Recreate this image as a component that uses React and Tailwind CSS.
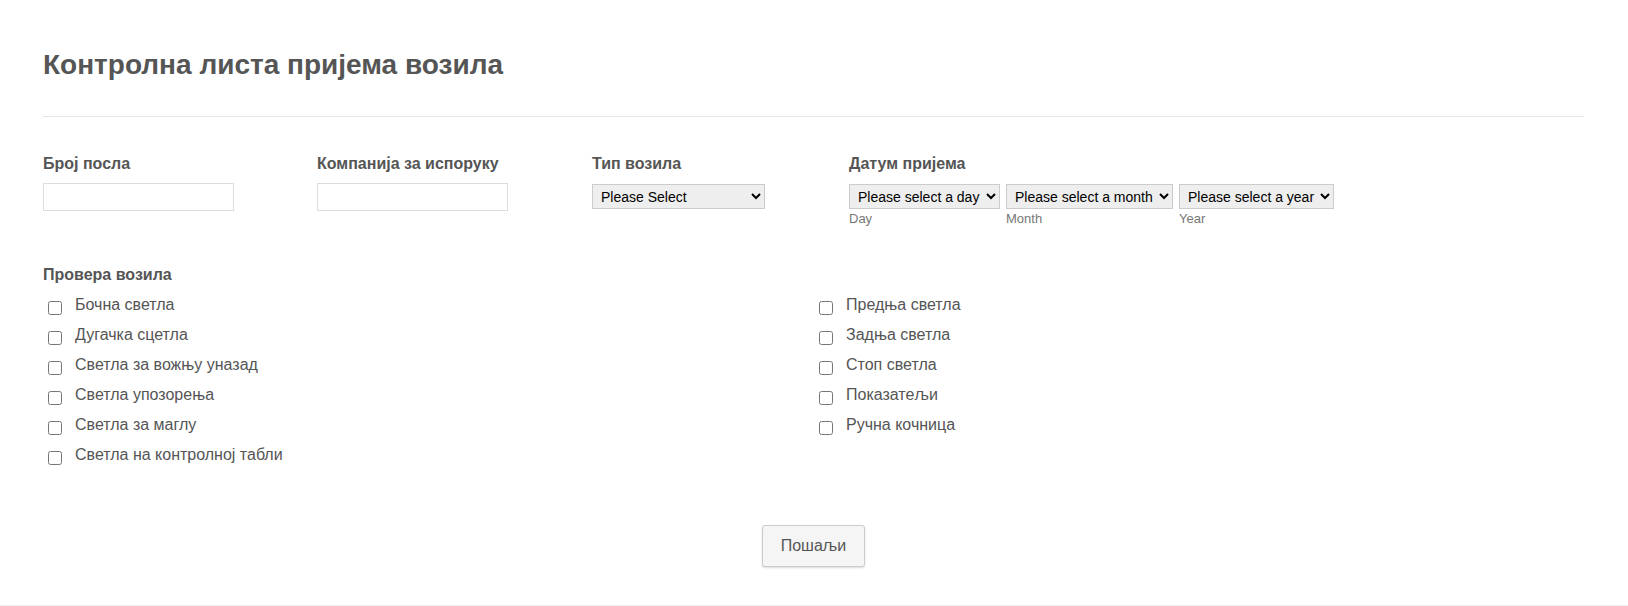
import { useState } from "react";

const LEFT_ITEMS = [
  "Бочна светла",
  "Дугачка сцетла",
  "Светла за вожњу уназад",
  "Светла упозорења",
  "Светла за маглу",
  "Светла на контролној табли",
];

const RIGHT_ITEMS = [
  "Предња светла",
  "Задња светла",
  "Стоп светла",
  "Показатељи",
  "Ручна кочница",
];

function CheckItem({ label }) {
  const [checked, setChecked] = useState(false);
  return (
    <label className="flex items-center h-[30px] text-[16px] text-[#555] cursor-pointer">
      <input
        type="checkbox"
        checked={checked}
        onChange={() => setChecked(!checked)}
        className="w-[14px] h-[14px] ml-[5px] mr-[13px] mt-[4px]"
      />
      <span className="-mt-[2px]">{label}</span>
    </label>
  );
}

export default function App() {
  return (
    <div
      className="min-h-[606px] bg-white border-b border-[#eee] pl-[43px] pr-[44px] pt-[47px]"
      style={{ fontFamily: '"Liberation Sans", Arial, sans-serif' }}
    >
      <h1 className="text-[28px] leading-[36px] font-bold text-[#555]">
        Контролна листа пријема возила
      </h1>
      <div className="mt-[33px] border-t border-[#e6e6e6]" />

      {/* top fields */}
      <div className="flex mt-[37px]">
        <div className="w-[274px]">
          <div className="text-[16px] font-bold text-[#555] leading-[20px]">Број посла</div>
          <input
            type="text"
            className="mt-[9px] w-[191px] h-[28px] border border-[#ddd] bg-white"
          />
        </div>
        <div className="w-[275px]">
          <div className="text-[16px] font-bold text-[#555] leading-[20px]">
            Компанија за испоруку
          </div>
          <input
            type="text"
            className="mt-[9px] w-[191px] h-[28px] border border-[#ddd] bg-white"
          />
        </div>
        <div className="w-[257px]">
          <div className="text-[16px] font-bold text-[#555] leading-[20px]">Тип возила</div>
          <select className="mt-[10px] w-[173px] h-[25px] border border-[#ccc] bg-[#eee] text-[14px] text-black pl-[4px]">
            <option>Please Select</option>
          </select>
        </div>
        <div>
          <div className="text-[16px] font-bold text-[#555] leading-[20px]">Датум пријема</div>
          <div className="flex gap-[6px] mt-[10px]">
            <div className="flex flex-col">
              <select className="w-[151px] h-[25px] border border-[#ccc] bg-[#eee] text-[14px] text-black pl-[4px]">
                <option>Please select a day</option>
              </select>
              <span className="text-[13px] leading-[16px] text-[#777] mt-[2px]">Day</span>
            </div>
            <div className="flex flex-col">
              <select className="w-[167px] h-[25px] border border-[#ccc] bg-[#eee] text-[14px] text-black pl-[4px]">
                <option>Please select a month</option>
              </select>
              <span className="text-[13px] leading-[16px] text-[#777] mt-[2px]">Month</span>
            </div>
            <div className="flex flex-col">
              <select className="w-[155px] h-[25px] border border-[#ccc] bg-[#eee] text-[14px] text-black pl-[4px]">
                <option>Please select a year</option>
              </select>
              <span className="text-[13px] leading-[16px] text-[#777] mt-[2px]">Year</span>
            </div>
          </div>
        </div>
      </div>

      {/* checklist */}
      <div className="mt-[38px]">
        <div className="text-[16px] font-bold text-[#555] leading-[20px]">Провера возила</div>
        <div className="grid grid-cols-[771px_1fr] mt-[6px]">
          <div className="flex flex-col">
            {LEFT_ITEMS.map((t) => (
              <CheckItem key={t} label={t} />
            ))}
          </div>
          <div className="flex flex-col">
            {RIGHT_ITEMS.map((t) => (
              <CheckItem key={t} label={t} />
            ))}
          </div>
        </div>
      </div>

      <div className="flex justify-center mt-[54px]">
        <button className="w-[103px] h-[42px] border border-[#ccc] rounded-[3px] bg-[#f5f5f5] text-[16px] text-[#555] shadow-[0_1px_2px_rgba(0,0,0,0.15)]">
          Пошаљи
        </button>
      </div>
    </div>
  );
}
